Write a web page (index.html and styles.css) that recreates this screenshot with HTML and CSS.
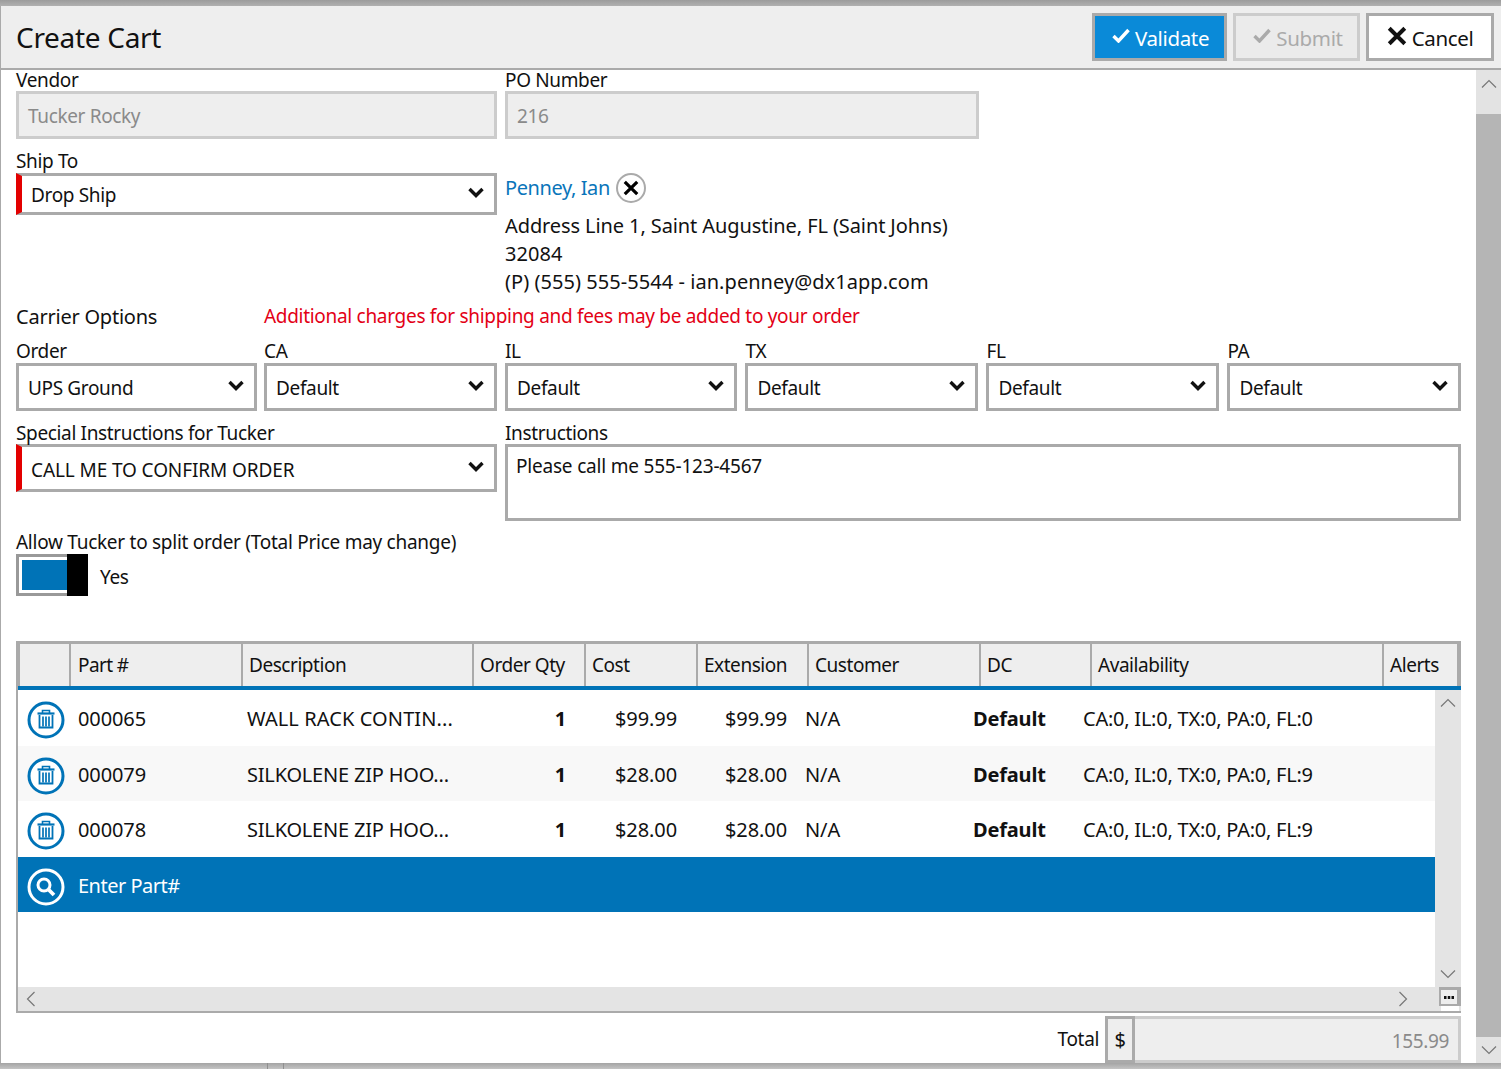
FILE: index.html
```html
<!DOCTYPE html>
<html lang="en">
<head>
<meta charset="utf-8">
<title>Create Cart</title>
<link rel="stylesheet" href="styles.css">
</head>
<body>
<svg class="defs" width="0" height="0" aria-hidden="true">
  <symbol id="chev" viewBox="0 0 16 12"><path d="M1.500 2 8 8.500 14.500 2" fill="none" stroke="currentColor" stroke-width="3.400"/></symbol>
  <symbol id="check" viewBox="0 0 18 15"><path d="M1.500 8 6.500 13 16.500 2" fill="none" stroke="currentColor" stroke-width="3.400"/></symbol>
  <symbol id="cross" viewBox="0 0 18 18"><path d="M2 2 16 16M16 2 2 16" fill="none" stroke="currentColor" stroke-width="3.600"/></symbol>
  <symbol id="trash" viewBox="0 0 38 38"><circle cx="19" cy="19" r="17" fill="#fff" stroke="#0073b7" stroke-width="3"/><g fill="none" stroke="#0073b7"><path d="M10.500 12.500h17" stroke-width="2.200"/><path d="M15.500 12v-2.500h7V12" stroke-width="1.600"/><path d="M12.500 14v12.500h13V14" stroke-width="1.800"/><path d="M16 15.500v10M19 15.500v10M22 15.500v10" stroke-width="1.700"/></g></symbol>
  <symbol id="search" viewBox="0 0 38 38"><circle cx="19" cy="19" r="17" fill="none" stroke="#fff" stroke-width="3"/><circle cx="17" cy="17" r="6" fill="none" stroke="#fff" stroke-width="3"/><path d="M21.500 21.500l5.500 5.500" fill="none" stroke="#fff" stroke-width="3.800"/></symbol>
</svg>
<div class="window">
  <header class="titlebar">
    <h1 class="title">Create Cart</h1>
    <div class="actions">
      <button class="btn btn-primary"><svg class="ic-check"><use href="#check"/></svg>Validate</button>
      <button class="btn btn-disabled"><svg class="ic-check"><use href="#check"/></svg>Submit</button>
      <button class="btn btn-cancel"><svg class="ic-cross"><use href="#cross"/></svg>Cancel</button>
    </div>
  </header>
  <div class="content">
    <main class="form">
      <section class="grid row-vendor">
        <div class="field span2"><label>Vendor</label><div class="input disabled">Tucker Rocky</div></div>
        <div class="field span2"><label>PO Number</label><div class="input disabled">216</div></div>
      </section>
      <section class="grid row-ship">
        <div class="field span2">
          <label>Ship To</label>
          <div class="select required short">Drop Ship<svg class="ic-chev"><use href="#chev"/></svg></div>
        </div>
        <div class="address">
          <div class="contact"><a class="link">Penney, Ian</a><span class="clear"><svg class="ic-clear"><use href="#cross"/></svg></span></div>
          <div class="addr-line1">Address Line 1, Saint Augustine, FL (Saint Johns)</div>
          <div>32084</div>
          <div>(P) (555) 555-5544 - ian.penney@dx1app.com</div>
        </div>
      </section>
      <section class="grid row-carrier">
        <div class="span1 carrier-title">Carrier Options</div>
        <div class="warning">Additional charges for shipping and fees may be added to your order</div>
      </section>
      <section class="grid row-options">
        <div class="field"><label>Order</label><div class="select">UPS Ground<svg class="ic-chev"><use href="#chev"/></svg></div></div>
        <div class="field"><label>CA</label><div class="select">Default<svg class="ic-chev"><use href="#chev"/></svg></div></div>
        <div class="field"><label>IL</label><div class="select">Default<svg class="ic-chev"><use href="#chev"/></svg></div></div>
        <div class="field"><label>TX</label><div class="select">Default<svg class="ic-chev"><use href="#chev"/></svg></div></div>
        <div class="field"><label>FL</label><div class="select">Default<svg class="ic-chev"><use href="#chev"/></svg></div></div>
        <div class="field"><label>PA</label><div class="select">Default<svg class="ic-chev"><use href="#chev"/></svg></div></div>
      </section>
      <section class="grid row-special">
        <div class="field span2"><label>Special Instructions for Tucker</label><div class="select required caps">CALL ME TO CONFIRM ORDER<svg class="ic-chev"><use href="#chev"/></svg></div></div>
        <div class="field span4"><label>Instructions</label><div class="textarea">Please call me 555-123-4567</div></div>
      </section>
      <section class="row-split">
        <label>Allow Tucker to split order (Total Price may change)</label>
        <div class="toggle-row">
          <div class="toggle"><span class="toggle-fill"></span><span class="toggle-thumb"></span></div>
          <span class="toggle-text">Yes</span>
        </div>
      </section>
      <section class="table">
        <div class="thead">
          <div class="th"></div><div class="th th-part">Part #</div><div class="th">Description</div><div class="th">Order Qty</div><div class="th">Cost</div><div class="th">Extension</div><div class="th">Customer</div><div class="th">DC</div><div class="th">Availability</div><div class="th th-last">Alerts</div>
        </div>
        <div class="tbody">
          <div class="rows">
            <div class="tr tall"><svg class="ic-circle"><use href="#trash"/></svg><span>000065</span><span class="desc">WALL RACK CONTIN...</span><b class="num qty">1</b><span class="num">$99.99</span><span class="num">$99.99</span><span class="cust">N/A</span><b class="dc">Default</b><span class="avail">CA:0, IL:0, TX:0, PA:0, FL:0</span></div>
            <div class="tr short alt"><svg class="ic-circle"><use href="#trash"/></svg><span>000079</span><span class="desc-s">SILKOLENE ZIP HOO...</span><b class="num qty">1</b><span class="num">$28.00</span><span class="num">$28.00</span><span class="cust">N/A</span><b class="dc">Default</b><span class="avail">CA:0, IL:0, TX:0, PA:0, FL:9</span></div>
            <div class="tr tall"><svg class="ic-circle"><use href="#trash"/></svg><span>000078</span><span class="desc-s">SILKOLENE ZIP HOO...</span><b class="num qty">1</b><span class="num">$28.00</span><span class="num">$28.00</span><span class="cust">N/A</span><b class="dc">Default</b><span class="avail">CA:0, IL:0, TX:0, PA:0, FL:9</span></div>
            <div class="tr short entry"><svg class="ic-circle"><use href="#search"/></svg><span class="entry-text">Enter Part#</span></div>
          </div>
          <div class="vscroll"><svg class="sb-ic" viewBox="0 0 16 10"><path d="M1 8.500 8 1.500l7 7" /></svg><svg class="sb-ic" viewBox="0 0 16 10"><path d="M1 1.500 8 8.500l7-7" /></svg></div>
        </div>
        <div class="hscroll">
          <svg class="sb-ic-h" viewBox="0 0 10 16"><path d="M8.500 1 1.500 8l7 7" /></svg>
          <svg class="sb-ic-h" viewBox="0 0 10 16"><path d="M1.500 1 8.500 8l-7 7" /></svg>
          <div class="corner">
            <div class="corner-box"><svg class="dots" viewBox="0 0 10 3"><path d="M0 0h2.500v3H0zM3.750 0h2.500v3h-2.500zM7.500 0H10v3H7.500z"/></svg></div>
            <div class="corner-gap"></div>
          </div>
        </div>
      </section>
      <section class="total-row">
        <span class="total-label">Total</span>
        <span class="currency">$</span>
        <div class="total-value">155.99</div>
      </section>
    </main>
    <aside class="page-scroll">
      <div class="ps-btn"><svg class="sb-ic" viewBox="0 0 16 10"><path d="M1 8.500 8 1.500l7 7" /></svg></div>
      <div class="ps-thumb"></div>
      <div class="ps-btn ps-bottom"><svg class="sb-ic" viewBox="0 0 16 10"><path d="M1 1.500 8 8.500l7-7" /></svg></div>
    </aside>
  </div>
</div>
</body>
</html>
```
FILE: styles.css
```css
* { box-sizing: border-box; }
html, body { margin: 0; padding: 0; height: 100%; overflow: hidden; }
body {
  width: 1501px; height: 1069px;
  background:
    linear-gradient(#8f8f8f, #8f8f8f) 267px 1063px / 1px 6px no-repeat,
    linear-gradient(#8f8f8f, #8f8f8f) 283px 1063px / 1px 6px no-repeat,
    linear-gradient(#9c9c9c 0, #b0b0b0 6px, #a4a4a4 1063px, #c4c4c4 1069px);
  font-family: "Noto Sans", "Open Sans", sans-serif;
  font-size: 19px; line-height: 28px; color: #111; letter-spacing: -0.35px;
}
.defs { position: absolute; }
.window {
  width: 1501px; height: 1057px; margin-top: 6px; background: #fff;
  border-left: 1px solid #aaa; display: flex; flex-direction: column;
}
.titlebar {
  height: 64px; flex: none; background: #eee; border-bottom: 2px solid #aaa;
  display: flex; align-items: center; justify-content: space-between;
  padding: 0 7px 0 15px;
}
.title { margin: 0; font-size: 28px; font-weight: 400; letter-spacing: -0.3px; line-height: 40px; }
.actions { display: flex; gap: 6px; }
.btn {
  height: 48px; border: 3px solid #aaa; font: inherit; letter-spacing: inherit;
  font-size: 20.500px; display: flex; align-items: center; justify-content: center; gap: 5px;
  padding: 2px 0 0; color: #111; background: #fff;
}
.btn-primary { width: 135px; background: #0a8ad8; color: #fff; padding-left: 2px; }
.btn-disabled { width: 127px; background: #ebebeb; border-color: #ccc; color: #aaa; padding-left: 3px; }
.btn-cancel { width: 128px; }
.ic-check { width: 18px; height: 15px; margin-top: -5px; }
.ic-cross { width: 20px; height: 20px; margin-top: -5px; }
.content { flex: 1; display: flex; min-height: 0; }
.form { width: 1475px; padding: 0 15px; }
.grid { display: grid; grid-template-columns: 240px 233px 232.400px 233px 233px 1fr; column-gap: 8px; }
.span1 { grid-column: span 1; }
.span2 { grid-column: span 2; }
.span4 { grid-column: span 4; }
.field label, .row-split label { display: block; height: 21px; line-height: 21px; }
.input {
  height: 48px; border: 3px solid #ccc; background: #eee; color: #8a8a8a;
  padding: 2px 9px 0; display: flex; align-items: center;
}
.row-vendor .field:last-child { width: 474px; }
.row-vendor { height: 81px; }
.row-ship { height: 148px; }
.row-ship label { height: 22px; line-height: 20px; }
.select {
  height: 48px; border: 3px solid #aaa; background: #fff; padding: 2px 9px 0;
  display: flex; align-items: center; justify-content: space-between;
}
.select.required { border-left: 6px solid #e30000; padding-left: 9px; }
.select.short { height: 42px; }
.select.caps { letter-spacing: -0.1px; padding-top: 4px; }
.select.caps .ic-chev { margin-top: -6px; }
.ic-chev { width: 16px; height: 12px; color: #111; margin: -4px 1px 0 0; flex: none; }
.address { grid-column: span 2; padding-top: 26px; white-space: nowrap; font-size: 20px; letter-spacing: 0.05px; }
.addr-line1 { letter-spacing: -0.1px; }
.contact { height: 28px; display: flex; align-items: center; gap: 6px; margin-bottom: 10px; margin-top: -3px; letter-spacing: -0.4px; }
.link { color: #0a75ba; }
.clear {
  width: 30px; height: 30px; border: 2px solid #aaa; border-radius: 50%;
  display: flex; align-items: center; justify-content: center; color: #000;
}
.ic-clear { width: 16px; height: 16px; }
.row-carrier { height: 42px; padding-top: 4px; }
.carrier-title { font-size: 20px; letter-spacing: -0.23px; white-space: nowrap; }
.warning { grid-column: span 5; color: #e30015; margin-top: -1px; letter-spacing: -0.3px; }
.row-options { height: 82px; }
.row-options .field label { height: 22px; line-height: 20px; }
.row-options .field:first-child { margin-right: -1px; }
.row-special { height: 107px; }
.row-special label { height: 21px; line-height: 20px; }
.textarea { height: 77px; border: 3px solid #aaa; padding: 5px 8px; letter-spacing: -0.2px; }
.toggle-row { display: flex; align-items: center; gap: 12px; }
.toggle-text { padding-top: 4px; }
.toggle { width: 72px; height: 42px; border: 3px solid #999; border-right: 0; position: relative; padding: 3px; }
.toggle-fill { display: block; width: 45px; height: 30px; background: #0073b7; }
.toggle-thumb { position: absolute; right: 0; top: -3px; width: 21px; height: 42px; background: #000; }
.row-split { height: 111px; }
.row-split label { height: 24px; line-height: 24px; letter-spacing: -0.27px; }
.table {
  width: 1445px; height: 372px; border: 2px solid #aaa; border-top: 3px solid #aaa; border-right: 0;
  display: flex; flex-direction: column;
}
.thead {
  height: 46px; flex: none; background: #eee; border-bottom: 4px solid #0073b7; display: grid;
  grid-template-columns: 53px 172px 231px 112px 112px 111px 172px 111px 292px 77px;
}
.th { border-right: 2px solid #aaa; padding-left: 6px; line-height: 42px; white-space: nowrap; letter-spacing: -0.45px; }
.th:first-child { border-left: 2px solid #aaa; }
.th-part { padding-left: 7px; letter-spacing: -0.6px; }
.th-last { border-right-width: 4px; }
.tbody { height: 297px; flex: none; display: flex; }
.rows { flex: 1; font-size: 20px; letter-spacing: -0.1px; }
.tr {
  display: grid; align-items: center; white-space: nowrap; padding-top: 2px;
  grid-template-columns: 60px 169px 218px 100px 112px 110px 187px 109px 1fr;
}
.tr.tall { height: 56px; }
.tr.short { height: 55px; padding-top: 3px; }
.tr.alt { background: #f8f8f8; }
.tr.entry { background: #0073b7; color: #fff; grid-template-columns: 60px 1fr; }
.entry-text { letter-spacing: -0.5px; }
.desc { letter-spacing: 0.1px; }
.desc-s { letter-spacing: -0.2px; }
.avail { letter-spacing: -0.24px; }
.dc { letter-spacing: -0.17px; margin-left: -1px; }
.num { text-align: right; }
.qty { margin-right: -1px; }
.cust { padding-left: 18px; }
.ic-circle { width: 38px; height: 38px; margin: 1px 0 0 9px; }
.vscroll { width: 26px; background: #e4e4e4; display: flex; flex-direction: column; align-items: center; justify-content: space-between; padding: 8px 0; }
.sb-ic { width: 16px; height: 10px; fill: none; stroke: #777; stroke-width: 1.2; }
.sb-ic-h { width: 10px; height: 16px; fill: none; stroke: #777; stroke-width: 1.2; }
.hscroll { flex: 1; background: #e4e4e4; display: flex; align-items: center; justify-content: space-between; padding: 0 53px 0 8px; position: relative; }
.corner { position: absolute; right: 0; top: 0; width: 22px; height: 24px; display: flex; flex-direction: column; }
.corner-box { height: 19px; border: solid #aaa; border-width: 3px 4px 2px 2px; background: #eee; display: flex; align-items: center; justify-content: center; }
.corner-gap { flex: 1; background: #fff; margin: 0 2px; }
.dots { width: 10px; height: 3px; fill: #111; }
.total-row { display: flex; align-items: center; margin-top: 3px; height: 47px; width: 1445px; }
.total-label { margin-left: auto; margin-right: 6px; padding-bottom: 2px; }
.currency { width: 30px; height: 47px; border: 3px solid #aaa; display: flex; align-items: center; justify-content: center; background: #eee; font-size: 20px; }
.total-value { width: 326px; height: 47px; border: 3px solid #ccc; border-left: 0; background: #eee; color: #8a8a8a; display: flex; align-items: center; justify-content: flex-end; padding: 2px 9px 0 0; }
.page-scroll { width: 25px; background: #b5b5b5; display: flex; flex-direction: column; justify-content: space-between; }
.ps-btn { height: 44px; background: #e3e3e3; display: flex; align-items: flex-start; justify-content: center; padding-top: 9px; }
.ps-bottom { height: 26px; padding-top: 8px; }
.ps-thumb { flex: 1; }
```
